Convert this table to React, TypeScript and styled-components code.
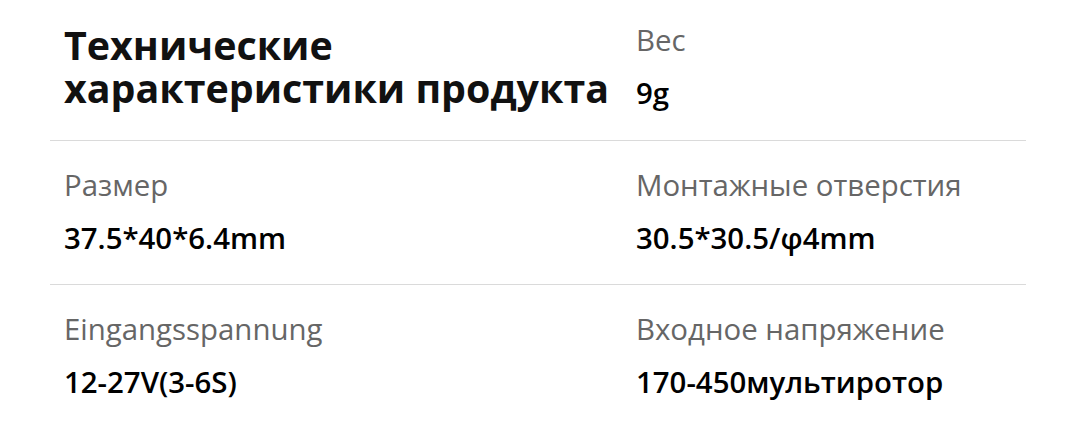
import React from "react";
import styled, { createGlobalStyle } from "styled-components";

interface Spec {
  label: string;
  value: string;
}

const rows: Spec[][] = [
  [
    { label: "Размер", value: "37.5*40*6.4mm" },
    { label: "Монтажные отверстия", value: "30.5*30.5/φ4mm" },
  ],
  [
    { label: "Eingangsspannung", value: "12-27V(3-6S)" },
    { label: "Входное напряжение", value: "170-450мультиротор" },
  ],
];

const SpecCell: React.FC<Spec> = ({ label, value }) => (
  <Cell>
    <Label>{label}</Label>
    <Value>{value}</Value>
  </Cell>
);

const App: React.FC = () => {
  return (
    <>
      <GlobalStyle />
      <Wrapper>
        <Row $first>
          <Title>
            Технические
            <br />
            характеристики продукта
          </Title>
          <SpecCell label="Вес" value="9g" />
        </Row>
        {rows.map((row, i) => (
          <Row key={i}>
            {row.map((spec) => (
              <SpecCell key={spec.label} {...spec} />
            ))}
          </Row>
        ))}
      </Wrapper>
    </>
  );
};

export default App;

/** ============================= styled-components ============================= */

const GlobalStyle = createGlobalStyle`
  body {
    margin: 0;
    background: #ffffff;
    font-family: "Open Sans", "Liberation Sans", sans-serif;
  }
`;

const Wrapper = styled.div`
  width: 976px;
  margin-left: 50px;
`;

const Row = styled.div<{ $first?: boolean }>`
  display: grid;
  grid-template-columns: 572px 1fr;
  padding: ${({ $first }) => ($first ? "20px 0 27px 14px" : "24px 0 26px 14px")};
  border-top: ${({ $first }) => ($first ? "none" : "1px solid #dadada")};
`;

const Title = styled.h2`
  margin: 0;
  align-self: center;
  color: #111111;
  font-size: 39.4px;
  line-height: 43px;
  font-weight: 700;
`;

const Cell = styled.div`
  display: flex;
  flex-direction: column;
  gap: 13px;
`;

const Label = styled.div`
  color: #666666;
  font-size: 29.4px;
  line-height: 40px;
`;

const Value = styled.div`
  color: #000000;
  font-size: 29.4px;
  line-height: 40px;
  font-weight: 600;
`;
